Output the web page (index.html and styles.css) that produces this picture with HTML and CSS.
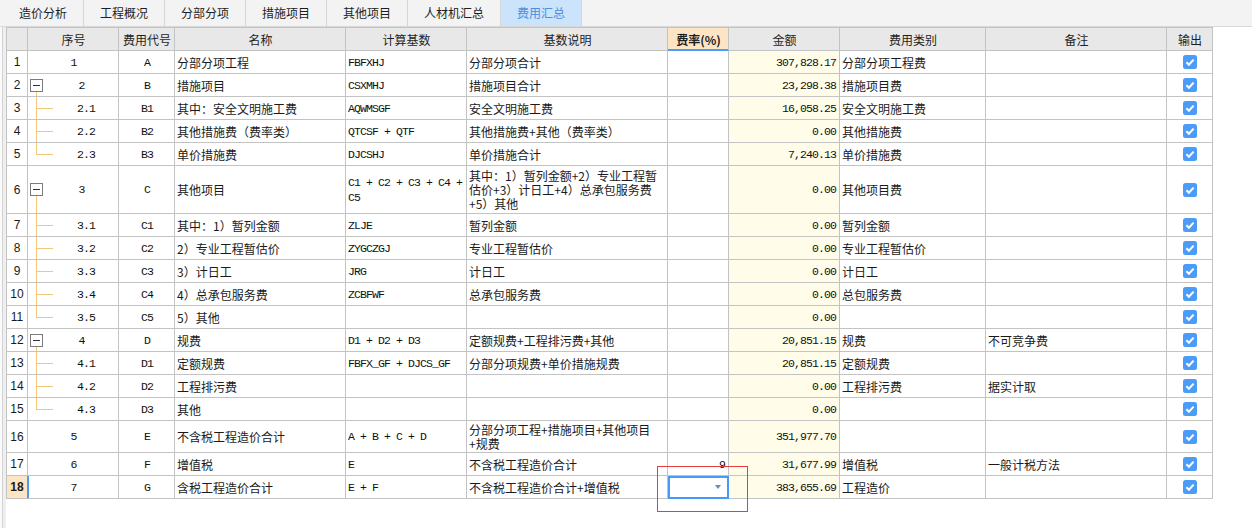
FILE: index.html
```html
<!DOCTYPE html>
<html lang="zh-CN">
<head>
<meta charset="utf-8">
<title>费用汇总</title>
<link rel="stylesheet" href="styles.css">
</head>
<body>
<div class="app">
  <nav class="tabs">
    <div class="tab">造价分析</div>
    <div class="tab">工程概况</div>
    <div class="tab">分部分项</div>
    <div class="tab">措施项目</div>
    <div class="tab">其他项目</div>
    <div class="tab">人材机汇总</div>
    <div class="tab active">费用汇总</div>
  </nav>
  <div class="main">
    <div class="gutter"></div>
    <div class="sheet">
      <div class="row head">
        <div></div>
        <div class="c">序号</div>
        <div class="c">费用代号</div>
        <div class="c">名称</div>
        <div class="c">计算基数</div>
        <div class="c">基数说明</div>
        <div class="c sel">费率(%)</div>
        <div class="c">金额</div>
        <div class="c">费用类别</div>
        <div class="c">备注</div>
        <div class="c">输出</div>
      </div>

      <div class="row">
        <div class="rn">1</div>
        <div class="seq mono">1</div>
        <div class="c mono">A</div>
        <div>分部分项工程</div>
        <div class="mono">FBFXHJ</div>
        <div>分部分项合计</div>
        <div class="r mono"></div>
        <div class="amt mono">307,828.17</div>
        <div>分部分项工程费</div>
        <div></div>
        <div class="c"><svg class="chk" width="14" height="14" viewBox="0 0 14 14"><rect width="14" height="14" rx="2.5" fill="#4a9cf8"/><path d="M3.4 7.3 L5.9 9.7 L10.6 4.6" stroke="#fff" stroke-width="2" fill="none"/></svg></div>
      </div>

      <div class="row">
        <div class="rn">2</div>
        <div class="seq tree"><span class="g parent"><i class="box"></i></span><span class="t mono">2</span></div>
        <div class="c mono">B</div>
        <div>措施项目</div>
        <div class="mono">CSXMHJ</div>
        <div>措施项目合计</div>
        <div class="r mono"></div>
        <div class="amt mono">23,298.38</div>
        <div>措施项目费</div>
        <div></div>
        <div class="c"><svg class="chk" width="14" height="14" viewBox="0 0 14 14"><rect width="14" height="14" rx="2.5" fill="#4a9cf8"/><path d="M3.4 7.3 L5.9 9.7 L10.6 4.6" stroke="#fff" stroke-width="2" fill="none"/></svg></div>
      </div>

      <div class="row">
        <div class="rn">3</div>
        <div class="seq tree"><span class="g mid"></span><span class="t mono">2.1</span></div>
        <div class="c mono">B1</div>
        <div>其中：安全文明施工费</div>
        <div class="mono">AQWMSGF</div>
        <div>安全文明施工费</div>
        <div class="r mono"></div>
        <div class="amt mono">16,058.25</div>
        <div>安全文明施工费</div>
        <div></div>
        <div class="c"><svg class="chk" width="14" height="14" viewBox="0 0 14 14"><rect width="14" height="14" rx="2.5" fill="#4a9cf8"/><path d="M3.4 7.3 L5.9 9.7 L10.6 4.6" stroke="#fff" stroke-width="2" fill="none"/></svg></div>
      </div>

      <div class="row">
        <div class="rn">4</div>
        <div class="seq tree"><span class="g mid"></span><span class="t mono">2.2</span></div>
        <div class="c mono">B2</div>
        <div>其他措施费（费率类）</div>
        <div class="mono">QTCSF + QTF</div>
        <div>其他措施费+其他（费率类）</div>
        <div class="r mono"></div>
        <div class="amt mono">0.00</div>
        <div>其他措施费</div>
        <div></div>
        <div class="c"><svg class="chk" width="14" height="14" viewBox="0 0 14 14"><rect width="14" height="14" rx="2.5" fill="#4a9cf8"/><path d="M3.4 7.3 L5.9 9.7 L10.6 4.6" stroke="#fff" stroke-width="2" fill="none"/></svg></div>
      </div>

      <div class="row">
        <div class="rn">5</div>
        <div class="seq tree"><span class="g last"></span><span class="t mono">2.3</span></div>
        <div class="c mono">B3</div>
        <div>单价措施费</div>
        <div class="mono">DJCSHJ</div>
        <div>单价措施合计</div>
        <div class="r mono"></div>
        <div class="amt mono">7,240.13</div>
        <div>单价措施费</div>
        <div></div>
        <div class="c"><svg class="chk" width="14" height="14" viewBox="0 0 14 14"><rect width="14" height="14" rx="2.5" fill="#4a9cf8"/><path d="M3.4 7.3 L5.9 9.7 L10.6 4.6" stroke="#fff" stroke-width="2" fill="none"/></svg></div>
      </div>

      <div class="row tall3">
        <div class="rn">6</div>
        <div class="seq tree"><span class="g parent"><i class="box"></i></span><span class="t mono">3</span></div>
        <div class="c mono">C</div>
        <div>其他项目</div>
        <div class="mono wrap"><span class="ln">C1 + C2 + C3 + C4 +</span><span class="ln">C5</span></div>
        <div class="wrap"><span class="ln">其中：1）暂列金额+2）专业工程暂</span><span class="ln">估价+3）计日工+4）总承包服务费</span><span class="ln">+5）其他</span></div>
        <div class="r mono"></div>
        <div class="amt mono">0.00</div>
        <div>其他项目费</div>
        <div></div>
        <div class="c"><svg class="chk" width="14" height="14" viewBox="0 0 14 14"><rect width="14" height="14" rx="2.5" fill="#4a9cf8"/><path d="M3.4 7.3 L5.9 9.7 L10.6 4.6" stroke="#fff" stroke-width="2" fill="none"/></svg></div>
      </div>

      <div class="row">
        <div class="rn">7</div>
        <div class="seq tree"><span class="g mid"></span><span class="t mono">3.1</span></div>
        <div class="c mono">C1</div>
        <div>其中：1）暂列金额</div>
        <div class="mono">ZLJE</div>
        <div>暂列金额</div>
        <div class="r mono"></div>
        <div class="amt mono">0.00</div>
        <div>暂列金额</div>
        <div></div>
        <div class="c"><svg class="chk" width="14" height="14" viewBox="0 0 14 14"><rect width="14" height="14" rx="2.5" fill="#4a9cf8"/><path d="M3.4 7.3 L5.9 9.7 L10.6 4.6" stroke="#fff" stroke-width="2" fill="none"/></svg></div>
      </div>

      <div class="row">
        <div class="rn">8</div>
        <div class="seq tree"><span class="g mid"></span><span class="t mono">3.2</span></div>
        <div class="c mono">C2</div>
        <div>2）专业工程暂估价</div>
        <div class="mono">ZYGCZGJ</div>
        <div>专业工程暂估价</div>
        <div class="r mono"></div>
        <div class="amt mono">0.00</div>
        <div>专业工程暂估价</div>
        <div></div>
        <div class="c"><svg class="chk" width="14" height="14" viewBox="0 0 14 14"><rect width="14" height="14" rx="2.5" fill="#4a9cf8"/><path d="M3.4 7.3 L5.9 9.7 L10.6 4.6" stroke="#fff" stroke-width="2" fill="none"/></svg></div>
      </div>

      <div class="row">
        <div class="rn">9</div>
        <div class="seq tree"><span class="g mid"></span><span class="t mono">3.3</span></div>
        <div class="c mono">C3</div>
        <div>3）计日工</div>
        <div class="mono">JRG</div>
        <div>计日工</div>
        <div class="r mono"></div>
        <div class="amt mono">0.00</div>
        <div>计日工</div>
        <div></div>
        <div class="c"><svg class="chk" width="14" height="14" viewBox="0 0 14 14"><rect width="14" height="14" rx="2.5" fill="#4a9cf8"/><path d="M3.4 7.3 L5.9 9.7 L10.6 4.6" stroke="#fff" stroke-width="2" fill="none"/></svg></div>
      </div>

      <div class="row">
        <div class="rn">10</div>
        <div class="seq tree"><span class="g mid"></span><span class="t mono">3.4</span></div>
        <div class="c mono">C4</div>
        <div>4）总承包服务费</div>
        <div class="mono">ZCBFWF</div>
        <div>总承包服务费</div>
        <div class="r mono"></div>
        <div class="amt mono">0.00</div>
        <div>总包服务费</div>
        <div></div>
        <div class="c"><svg class="chk" width="14" height="14" viewBox="0 0 14 14"><rect width="14" height="14" rx="2.5" fill="#4a9cf8"/><path d="M3.4 7.3 L5.9 9.7 L10.6 4.6" stroke="#fff" stroke-width="2" fill="none"/></svg></div>
      </div>

      <div class="row">
        <div class="rn">11</div>
        <div class="seq tree"><span class="g last"></span><span class="t mono">3.5</span></div>
        <div class="c mono">C5</div>
        <div>5）其他</div>
        <div class="mono"></div>
        <div></div>
        <div class="r mono"></div>
        <div class="amt mono">0.00</div>
        <div></div>
        <div></div>
        <div class="c"><svg class="chk" width="14" height="14" viewBox="0 0 14 14"><rect width="14" height="14" rx="2.5" fill="#4a9cf8"/><path d="M3.4 7.3 L5.9 9.7 L10.6 4.6" stroke="#fff" stroke-width="2" fill="none"/></svg></div>
      </div>

      <div class="row">
        <div class="rn">12</div>
        <div class="seq tree"><span class="g parent"><i class="box"></i></span><span class="t mono">4</span></div>
        <div class="c mono">D</div>
        <div>规费</div>
        <div class="mono">D1 + D2 + D3</div>
        <div>定额规费+工程排污费+其他</div>
        <div class="r mono"></div>
        <div class="amt mono">20,851.15</div>
        <div>规费</div>
        <div>不可竞争费</div>
        <div class="c"><svg class="chk" width="14" height="14" viewBox="0 0 14 14"><rect width="14" height="14" rx="2.5" fill="#4a9cf8"/><path d="M3.4 7.3 L5.9 9.7 L10.6 4.6" stroke="#fff" stroke-width="2" fill="none"/></svg></div>
      </div>

      <div class="row">
        <div class="rn">13</div>
        <div class="seq tree"><span class="g mid"></span><span class="t mono">4.1</span></div>
        <div class="c mono">D1</div>
        <div>定额规费</div>
        <div class="mono">FBFX_GF + DJCS_GF</div>
        <div>分部分项规费+单价措施规费</div>
        <div class="r mono"></div>
        <div class="amt mono">20,851.15</div>
        <div>定额规费</div>
        <div></div>
        <div class="c"><svg class="chk" width="14" height="14" viewBox="0 0 14 14"><rect width="14" height="14" rx="2.5" fill="#4a9cf8"/><path d="M3.4 7.3 L5.9 9.7 L10.6 4.6" stroke="#fff" stroke-width="2" fill="none"/></svg></div>
      </div>

      <div class="row">
        <div class="rn">14</div>
        <div class="seq tree"><span class="g mid"></span><span class="t mono">4.2</span></div>
        <div class="c mono">D2</div>
        <div>工程排污费</div>
        <div class="mono"></div>
        <div></div>
        <div class="r mono"></div>
        <div class="amt mono">0.00</div>
        <div>工程排污费</div>
        <div>据实计取</div>
        <div class="c"><svg class="chk" width="14" height="14" viewBox="0 0 14 14"><rect width="14" height="14" rx="2.5" fill="#4a9cf8"/><path d="M3.4 7.3 L5.9 9.7 L10.6 4.6" stroke="#fff" stroke-width="2" fill="none"/></svg></div>
      </div>

      <div class="row">
        <div class="rn">15</div>
        <div class="seq tree"><span class="g last"></span><span class="t mono">4.3</span></div>
        <div class="c mono">D3</div>
        <div>其他</div>
        <div class="mono"></div>
        <div></div>
        <div class="r mono"></div>
        <div class="amt mono">0.00</div>
        <div></div>
        <div></div>
        <div class="c"><svg class="chk" width="14" height="14" viewBox="0 0 14 14"><rect width="14" height="14" rx="2.5" fill="#4a9cf8"/><path d="M3.4 7.3 L5.9 9.7 L10.6 4.6" stroke="#fff" stroke-width="2" fill="none"/></svg></div>
      </div>

      <div class="row tall2">
        <div class="rn">16</div>
        <div class="seq mono">5</div>
        <div class="c mono">E</div>
        <div>不含税工程造价合计</div>
        <div class="mono">A + B + C + D</div>
        <div class="wrap"><span class="ln">分部分项工程+措施项目+其他项目</span><span class="ln">+规费</span></div>
        <div class="r mono"></div>
        <div class="amt mono">351,977.70</div>
        <div></div>
        <div></div>
        <div class="c"><svg class="chk" width="14" height="14" viewBox="0 0 14 14"><rect width="14" height="14" rx="2.5" fill="#4a9cf8"/><path d="M3.4 7.3 L5.9 9.7 L10.6 4.6" stroke="#fff" stroke-width="2" fill="none"/></svg></div>
      </div>

      <div class="row">
        <div class="rn">17</div>
        <div class="seq mono">6</div>
        <div class="c mono">F</div>
        <div>增值税</div>
        <div class="mono">E</div>
        <div>不含税工程造价合计</div>
        <div class="r mono">9</div>
        <div class="amt mono">31,677.99</div>
        <div>增值税</div>
        <div>一般计税方法</div>
        <div class="c"><svg class="chk" width="14" height="14" viewBox="0 0 14 14"><rect width="14" height="14" rx="2.5" fill="#4a9cf8"/><path d="M3.4 7.3 L5.9 9.7 L10.6 4.6" stroke="#fff" stroke-width="2" fill="none"/></svg></div>
      </div>

      <div class="row current">
        <div class="rn">18</div>
        <div class="seq mono">7</div>
        <div class="c mono">G</div>
        <div>含税工程造价合计</div>
        <div class="mono">E + F</div>
        <div>不含税工程造价合计+增值税</div>
        <div class="r mono editing"><span class="caret"></span></div>
        <div class="amt mono">383,655.69</div>
        <div>工程造价</div>
        <div></div>
        <div class="c"><svg class="chk" width="14" height="14" viewBox="0 0 14 14"><rect width="14" height="14" rx="2.5" fill="#4a9cf8"/><path d="M3.4 7.3 L5.9 9.7 L10.6 4.6" stroke="#fff" stroke-width="2" fill="none"/></svg></div>
      </div>
    </div>
  </div>
  <div class="mark"></div>
</div>
</body>
</html>
```
FILE: styles.css
```css
* { box-sizing: border-box; }
html, body { margin: 0; padding: 0; background: #fff; }
body {
  font-family: "Noto Sans CJK SC", "Noto Sans", sans-serif;
  font-size: 12px;
  color: #1a1a1a;
  width: 1252px;
  height: 528px;
  overflow: hidden;
}
.app { position: relative; width: 1252px; height: 528px; }

/* tabs */
.tabs {
  display: flex;
  height: 27px;
  background: #f3f3f3;
  border-bottom: 1px solid #d9d9d9;
  padding-left: 3px;
}
.tab {
  padding: 0 16px;
  line-height: 26px;
  border-right: 1px solid #d6d6d6;
  color: #1e1e1e;
  white-space: nowrap;
}
.tab.active { background: #cbe4fc; color: #4a8fe0; }

/* main */
.main { display: flex; }
.gutter {
  width: 6px;
  height: 501px;
  background: linear-gradient(90deg, #fafafa 0, #fafafa 2px, #d2d2d2 2px, #d2d2d2 3px, #efefef 3px);
}
.sheet {
  width: 1207px;
  border-left: 1px solid #c3c3c3;
  border-top: 1px solid #c3c3c3;
  align-self: flex-start;
}
.row {
  display: grid;
  grid-template-columns: 21px 91px 56px 171px 121px 201px 61px 111px 146px 181px 46px;
  height: 23px;
}
.row.tall3 { height: 48px; }
.row.tall2 { height: 32px; }
.row > div {
  border-right: 1px solid #c3c3c3;
  border-bottom: 1px solid #c3c3c3;
  display: flex;
  align-items: center;
  padding: 0 1px 0 2px;
  overflow: hidden;
  white-space: nowrap;
}
.row > .c { justify-content: center; }
.row > .r, .row > .amt { justify-content: flex-end; padding-right: 3px; }
.row > .amt { background: #fffdea; }
.row > .wrap {
  flex-direction: column;
  align-items: flex-start;
  justify-content: center;
}
.wrap .ln { display: block; height: 14px; line-height: 14px; }
.mono.wrap .ln { height: 15px; line-height: 15px; }

.mono {
  font-family: "Liberation Mono", "DejaVu Sans Mono", monospace;
  font-size: 11.5px;
  letter-spacing: -0.9px;
  color: #111;
}

.head > div { background: #e8e8e8; color: #1e1e1e; }
.head > .sel {
  background: #fde4c5;
  font-weight: bold;
  border-bottom-color: #4a9cf5;
  box-shadow: inset 0 -1px 0 #4a9cf5;
}

.row > .rn {
  justify-content: center;
  font-family: "Liberation Sans", "DejaVu Sans", sans-serif;
  font-size: 12px;
  padding: 0;
}

/* seq / tree */
.row > .seq { justify-content: center; }
.row > .seq.tree { padding: 0; align-items: stretch; justify-content: flex-start; }
.seq .t { flex: 1; display: flex; align-items: center; justify-content: center; }
.g { display: flex; align-items: center; flex: none; }
.g.parent {
  width: 17px;
  background: linear-gradient(#f5c57a, #f5c57a) no-repeat 8px 100% / 1px 50%;
}
.g.mid {
  width: 26px;
  background:
    linear-gradient(#f5c57a, #f5c57a) no-repeat 8px 0 / 1px 100%,
    linear-gradient(#f5c57a, #f5c57a) no-repeat 8px 50% / 17px 1px;
}
.g.last {
  width: 26px;
  background:
    linear-gradient(#f5c57a, #f5c57a) no-repeat 8px 0 / 1px 50%,
    linear-gradient(#f5c57a, #f5c57a) no-repeat 8px 50% / 17px 1px;
}
.box {
  width: 13px;
  height: 13px;
  margin-left: 2px;
  border: 1px solid #7c7c7c;
  background: #fff;
  display: flex;
  align-items: center;
  justify-content: center;
}
.box::before { content: ""; width: 7px; height: 1px; background: #333; }

.chk { display: block; }

/* current row */
.current > .rn { background: #fde4c5; font-weight: bold; border-right-color: #4a9cf5; }
.current > .seq { box-shadow: inset 1px 0 0 #4a9cf5; }
.current > .editing {
  outline: 2px solid #4599f7;
  outline-offset: -2px;
  padding-right: 7px;
}
.caret {
  width: 0;
  height: 0;
  border-left: 3.5px solid transparent;
  border-right: 3.5px solid transparent;
  border-top: 4px solid #6a8db6;
}

.mark {
  position: absolute;
  left: 657px;
  top: 466px;
  width: 91px;
  height: 46px;
  border: 1px solid #e53e3e;
}
```
